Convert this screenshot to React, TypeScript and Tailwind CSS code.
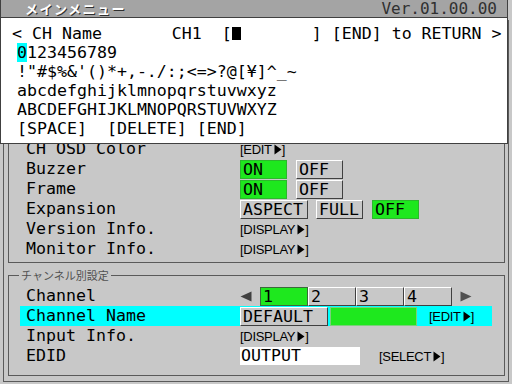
import { ReactNode } from 'react';

const mono = "font-['DejaVu_Sans_Mono',monospace] text-[16.6px]";

function Arrow({ dir }: { dir: 'left' | 'right' }) {
  return (
    <svg width="12" height="11" viewBox="0 0 12 11">
      {dir === 'left' ? (
        <path d="M0.5 5.5 L11.5 0.5 L11.5 10.5 Z" fill="#404040" />
      ) : (
        <path d="M11.5 5.5 L0.5 0.5 L0.5 10.5 Z" fill="#505050" />
      )}
    </svg>
  );
}

function Link({ label }: { label: string }) {
  return (
    <span className="flex items-center font-['Liberation_Sans',Arial,sans-serif] text-[13px] leading-none tracking-[-0.3px] text-black">
      [{label}
      <svg width="8" height="11" viewBox="0 0 8 11" className="ml-[2px]">
        <path d="M0.5 0.5 L7.5 5.5 L0.5 10.5 Z" fill="#000" />
      </svg>
      ]
    </span>
  );
}

function Row({ label, children, hi }: { label: string; children?: ReactNode; hi?: boolean }) {
  return (
    <div className={`flex h-[20px] items-center pl-[6px] ${hi ? 'bg-[#00ffff]' : ''}`}>
      <span className="w-[214px] whitespace-pre leading-[20px]">{label}</span>
      <div className="flex items-center">{children}</div>
    </div>
  );
}

const bevel = 'h-[19px] border border-t-white border-l-white border-b-[#404040] border-r-[#404040] bg-[#c8c8c8] pl-[2px] leading-[17px]';
const green = 'h-[19px] border border-[#2cb82c] bg-[#1ee81e] pl-[2px] leading-[17px]';

export default function App() {
  return (
    <div className={`relative h-[384px] w-[512px] overflow-hidden bg-[#c8c8c8] text-black ${mono}`}>
      <div className="flex h-[18px] w-[508px] items-start justify-between border-b border-l border-r border-[#404040] bg-[#a4a4a4] pl-[24px] pr-[10px]">
        <span className="font-['Noto_Sans_CJK_JP',sans-serif] text-[13px] font-bold leading-[17px] tracking-[1.5px] text-white [text-shadow:1px_1px_0_#303030]">
          メインメニュー
        </span>
        <span className="pt-[1px] text-[16px] leading-[16px] text-[#303030]">Ver.01.00.00</span>
      </div>

      <div className="ml-[3px] mt-[2px] w-[506px] border border-[#5a5a5a] pb-[5px] pl-[4px] pr-[3px] pt-[3px]">
        <div className="border border-[#5a5a5a] pb-[3px] pt-[114px]">
          <div className="ml-[11px] w-[472px]">
            <Row label="CH OSD Color">
              <Link label="EDIT" />
            </Row>
            <Row label="Buzzer">
              <span className={`${green} w-[47px]`}>ON</span>
              <span className={`${bevel} ml-[9px] w-[47px]`}>OFF</span>
            </Row>
            <Row label="Frame">
              <span className={`${green} w-[47px]`}>ON</span>
              <span className={`${bevel} ml-[9px] w-[47px]`}>OFF</span>
            </Row>
            <Row label="Expansion">
              <span className={`${bevel} w-[68px]`}>ASPECT</span>
              <span className={`${bevel} ml-[8px] w-[47px]`}>FULL</span>
              <span className={`${green} ml-[9px] w-[47px]`}>OFF</span>
            </Row>
            <Row label="Version Info.">
              <Link label="DISPLAY" />
            </Row>
            <Row label="Monitor Info.">
              <Link label="DISPLAY" />
            </Row>
          </div>
        </div>

        <fieldset className="mt-[5px] border border-[#5a5a5a] pb-[9px]">
          <legend className="ml-[10px] px-[2px] font-['Noto_Sans_CJK_JP',sans-serif] text-[11px] leading-[14px] text-[#505050]">
            チャンネル別設定
          </legend>
          <div className="ml-[11px] w-[472px] pt-[4px]">
            <Row label="Channel">
              <Arrow dir="left" />
              <div className="ml-[8px] flex">
                <span className="h-[19px] w-[48px] border border-[#3a6a3a] bg-[#1ee81e] pl-[2px] leading-[17px]">1</span>
                <span className={`${bevel} w-[48px]`}>2</span>
                <span className={`${bevel} w-[48px]`}>3</span>
                <span className={`${bevel} w-[48px]`}>4</span>
              </div>
              <span className="ml-[8px] flex">
                <Arrow dir="right" />
              </span>
            </Row>
            <Row label="Channel Name" hi>
              <span className={`${bevel} w-[88px]`}>DEFAULT</span>
              <span className="ml-[2px] h-[19px] w-[87px] border border-[#7ad07a] bg-[#1ee81e]" />
              <span className="ml-[12px]">
                <Link label="EDIT" />
              </span>
            </Row>
            <Row label="Input Info.">
              <Link label="DISPLAY" />
            </Row>
            <Row label="EDID">
              <span className="h-[18px] w-[120px] bg-white pl-[1px] leading-[18px]">OUTPUT</span>
              <span className="ml-[19px]">
                <Link label="SELECT" />
              </span>
            </Row>
          </div>
        </fieldset>
      </div>

      <div className="absolute left-0 top-[17px] h-[127px] w-[508px] border border-[#404040] bg-white pt-[6px] leading-[19px]">
        <div className="flex whitespace-pre pl-[11px]">
          <span>{'< CH Name       CH1  ['}</span>
          <span className="mr-[1px] mt-[3px] inline-block h-[13px] w-[9px] bg-black" />
          <span>{'       ] [END] to RETURN >'}</span>
        </div>
        <div className="whitespace-pre pl-[16px]">
          <span className="bg-[#00ffff]">0</span>123456789
        </div>
        <div className="whitespace-pre pl-[16px]">{'!"#$%&\'()*+,-./:;<=>?@[¥]^_~'}</div>
        <div className="whitespace-pre pl-[16px]">abcdefghijklmnopqrstuvwxyz</div>
        <div className="whitespace-pre pl-[16px]">ABCDEFGHIJKLMNOPQRSTUVWXYZ</div>
        <div className="whitespace-pre pl-[16px]">{'[SPACE]  [DELETE] [END]'}</div>
      </div>
    </div>
  );
}
